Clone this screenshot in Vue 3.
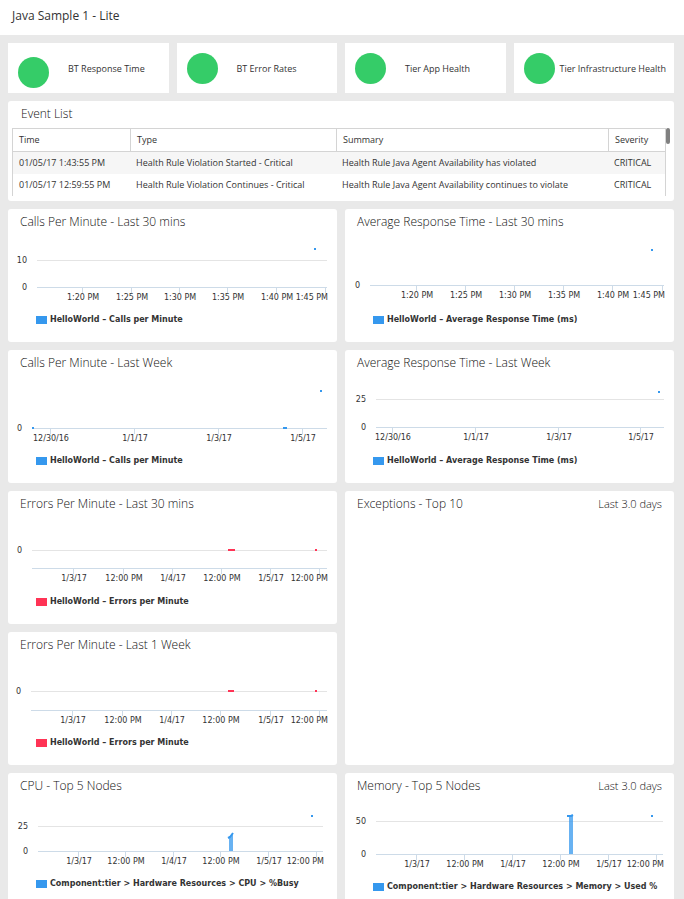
<script setup>
const BLUE = '#3598ee'
const RED = '#ff3355'

const statuses = [
  { label: 'BT Response Time', variant: 'low' },
  { label: 'BT Error Rates' },
  { label: 'Tier App Health' },
  { label: 'Tier Infrastructure Health', variant: 'tight' }
]

const events = [
  {
    time: '01/05/17 1:43:55 PM',
    type: 'Health Rule Violation Started - Critical',
    summary: 'Health Rule Java Agent Availability has violated',
    severity: 'CRITICAL'
  },
  {
    time: '01/05/17 12:59:55 PM',
    type: 'Health Rule Violation Continues - Critical',
    summary: 'Health Rule Java Agent Availability continues to violate',
    severity: 'CRITICAL'
  }
]

const minutes = ['1:20 PM', '1:25 PM', '1:30 PM', '1:35 PM', '1:40 PM', '1:45 PM']
const days = ['12/30/16', '1/1/17', '1/3/17', '1/5/17']
const halfDays = ['1/3/17', '12:00 PM', '1/4/17', '12:00 PM', '1/5/17', '12:00 PM']

const panels = [
  {
    title: 'Calls Per Minute - Last 30 mins',
    legend: 'HelloWorld – Calls per Minute',
    color: BLUE, height: 76, left: 29, right: 319, axis: 52,
    grid: [{ y: 25, label: '10' }, { y: 52, label: '0' }],
    ticks: [74, 123, 171, 219, 268, 317], labels: minutes, endLast: true,
    points: [{ x: 306, y: 13, w: 2 }]
  },
  {
    title: 'Average Response Time - Last 30 mins',
    legend: 'HelloWorld – Average Response Time (ms)',
    color: BLUE, height: 76, left: 25, right: 319, axis: 50,
    grid: [{ y: 50, label: '0' }],
    ticks: [71, 120, 169, 218, 267, 317], labels: minutes, endLast: true,
    points: [{ x: 306, y: 14, w: 2 }]
  },
  {
    title: 'Calls Per Minute - Last Week',
    legend: 'HelloWorld – Calls per Minute',
    color: BLUE, height: 76, left: 24, right: 319, axis: 52,
    grid: [{ y: 52, label: '0' }],
    ticks: [42, 126, 210, 294], labels: days,
    points: [{ x: 24, y: 51, w: 2 }, { x: 275, y: 51, w: 4 }, { x: 312, y: 14, w: 2 }]
  },
  {
    title: 'Average Response Time - Last Week',
    legend: 'HelloWorld – Average Response Time (ms)',
    color: BLUE, height: 76, left: 31, right: 319, axis: 51,
    grid: [{ y: 23, label: '25' }, { y: 51, label: '0' }],
    ticks: [47, 130, 213, 295], labels: days,
    points: [{ x: 313, y: 15, w: 2 }]
  },
  {
    title: 'Errors Per Minute - Last 30 mins',
    legend: 'HelloWorld – Errors per Minute',
    color: RED, height: 76, left: 24, right: 319, axis: 51,
    grid: [{ y: 33, label: '0' }],
    ticks: [65, 115, 164, 213, 262, 311], labels: halfDays, endLast: true,
    points: [{ x: 220, y: 32, w: 7 }, { x: 307, y: 32, w: 2 }]
  },
  { title: 'Exceptions - Top 10', range: 'Last 3.0 days', tall: true },
  {
    title: 'Errors Per Minute - Last 1 Week',
    legend: 'HelloWorld – Errors per Minute',
    color: RED, height: 76, left: 23, right: 319, axis: 52,
    grid: [{ y: 33, label: '0' }],
    ticks: [64, 114, 163, 212, 262, 311], labels: halfDays, endLast: true,
    points: [{ x: 220, y: 32, w: 6 }, { x: 307, y: 32, w: 2 }]
  },
  {
    title: 'CPU - Top 5 Nodes',
    legend: 'Component:tier > Hardware Resources > CPU > %Busy',
    color: BLUE, height: 76, left: 30, right: 315, axis: 52,
    grid: [{ y: 27, label: '25' }, { y: 52, label: '0' }],
    ticks: [70, 117, 165, 212, 260, 308], labels: halfDays, endLast: true,
    points: [{ x: 303, y: 16, w: 2 }],
    area: '221,52 221,38 225,35 225,52', line: '220,39 222,38 225,34'
  },
  {
    title: 'Memory - Top 5 Nodes', range: 'Last 3.0 days',
    legend: 'Component:tier > Hardware Resources > Memory > Used %',
    color: BLUE, height: 79, left: 31, right: 318, axis: 55,
    grid: [{ y: 22, label: '50' }, { y: 55, label: '0' }],
    ticks: [71, 119, 167, 215, 263, 311], labels: halfDays, endLast: true,
    points: [{ x: 306, y: 16, w: 2 }],
    area: '224,55 224,17 228,17 228,55', line: '222,17 226,17 228,16'
  }
]

const isEnd = (panel, i) => panel.endLast && i === panel.labels.length - 1
</script>

<template>
  <div class="page">
    <header class="topbar"><h1>Java Sample 1 - Lite</h1></header>

    <main class="board">
      <section class="statuses">
        <div v-for="s in statuses" :key="s.label" class="status" :class="s.variant">
          <span class="dot"></span>
          <span>{{ s.label }}</span>
        </div>
      </section>

      <section class="card events">
        <h2 class="events-title">Event List</h2>
        <div class="events-body">
          <table>
            <colgroup>
              <col class="c-time" /><col class="c-type" /><col /><col class="c-severity" />
            </colgroup>
            <thead>
              <tr><th>Time</th><th>Type</th><th>Summary</th><th>Severity</th></tr>
            </thead>
            <tbody>
              <tr v-for="e in events" :key="e.time">
                <td>{{ e.time }}</td><td>{{ e.type }}</td><td>{{ e.summary }}</td><td>{{ e.severity }}</td>
              </tr>
            </tbody>
          </table>
          <span class="thumb"></span>
        </div>
      </section>

      <section class="panels">
        <article v-for="p in panels" :key="p.title" class="card panel" :class="{ tall: p.tall }">
          <div class="panel-head">
            <h2>{{ p.title }}</h2>
            <span v-if="p.range" class="range">{{ p.range }}</span>
          </div>
          <template v-if="p.legend">
            <svg class="plot" :viewBox="`0 0 329 ${p.height}`" role="img" :aria-label="p.title">
              <g v-for="g in p.grid" :key="g.y">
                <rect v-if="g.y !== p.axis" class="grid" :x="p.left" :y="g.y" :width="p.right - p.left" height="1" />
                <text class="tick-text" text-anchor="end" :x="p.left - 10" :y="g.y + 3">{{ g.label }}</text>
              </g>
              <rect v-for="t in p.ticks" :key="t" class="tick" :x="t" :y="p.axis" width="1" height="6" />
              <rect class="axis" :x="p.left" :y="p.axis" :width="p.right - p.left" height="1" />
              <text
                v-for="(l, i) in p.labels" :key="i" class="tick-text"
                :text-anchor="isEnd(p, i) ? 'end' : 'middle'"
                :x="isEnd(p, i) ? p.right + 1 : p.ticks[i] + 1" :y="p.axis + 13"
              >{{ l }}</text>
              <polygon v-if="p.area" :points="p.area" :fill="p.color" opacity="0.75" />
              <polyline v-if="p.line" :points="p.line" fill="none" :stroke="p.color" stroke-width="2" />
              <rect v-for="d in p.points" :key="d.x" :x="d.x" :y="d.y" :width="d.w" height="2" :fill="p.color" />
            </svg>
            <div class="legend">
              <svg class="swatch" viewBox="0 0 11 8"><rect width="11" height="8" :fill="p.color" /></svg>
              <span>{{ p.legend }}</span>
            </div>
          </template>
        </article>
      </section>
    </main>
  </div>
</template>

<style>
body {
  margin: 0;
  background: #e9e9e9;
  overflow: hidden;
}
</style>

<style scoped>
.page {
  font-family: "Open Sans", sans-serif;
  color: #333;
}
h1,
h2 {
  margin: 0;
}
.topbar {
  background: #fff;
  padding: 6px 12px 9px;
}
h1 {
  font-size: 12px;
  line-height: 20px;
  font-weight: 400;
}
.board {
  display: grid;
  gap: 8px;
  padding: 8px 10px 8px 8px;
}
.statuses {
  display: grid;
  grid-template-columns: repeat(4, 1fr);
  gap: 8px;
}
.status {
  display: flex;
  align-items: center;
  gap: 19px;
  min-height: 50px;
  padding-left: 10px;
  background: #fff;
  font-size: 9px;
  white-space: nowrap;
}
.status.tight {
  gap: 5px;
}
.dot {
  flex: none;
  width: 31px;
  height: 31px;
  border-radius: 50%;
  background: #35cc68;
}
.status.low .dot {
  margin-top: 8px;
}
.card {
  background: #fff;
  border-radius: 3px;
}
h2 {
  font-size: 12px;
  line-height: 26px;
  font-weight: 300;
  color: #111;
}
.events {
  padding: 0 4px 5px;
}
.events-title {
  padding: 0 9px 1px;
}
.events-body {
  position: relative;
  padding-right: 4px;
}
table {
  width: 100%;
  table-layout: fixed;
  border-spacing: 0;
  font-size: 9px;
  border-left: 1px solid #d4d4d4;
  border-right: 1px solid #d4d4d4;
}
.c-time {
  width: 117px;
}
.c-type {
  width: 206px;
}
.c-severity {
  width: 57px;
}
th,
td {
  padding: 0 6px;
  text-align: left;
  font-weight: 400;
  white-space: nowrap;
  line-height: 22px;
}
th {
  border-top: 1px solid #d4d4d4;
  border-bottom: 1px solid #d4d4d4;
}
th + th {
  border-left: 1px solid #d4d4d4;
}
tbody tr:nth-child(odd) td {
  background: #f6f6f6;
}
.thumb {
  position: absolute;
  top: 0;
  right: 0;
  width: 4px;
  height: 16px;
  border-radius: 2px;
  background: #808080;
}
.panels {
  display: grid;
  grid-template-columns: 1fr 1fr;
  gap: 8px;
}
.panel {
  padding-bottom: 13px;
}
.tall {
  grid-row: span 2;
}
.panel-head {
  display: flex;
  justify-content: space-between;
  padding: 0 12px;
}
.range {
  font-size: 11px;
  line-height: 26px;
  font-weight: 300;
  color: #111;
}
.plot {
  display: block;
  width: 100%;
}
.grid {
  fill: #e4e4e4;
}
.axis {
  fill: #cddbe8;
}
.tick {
  fill: #cddbe8;
}
.tick-text {
  font-family: "DejaVu Sans", sans-serif;
  font-size: 8px;
  fill: #333;
}
.legend {
  display: flex;
  align-items: center;
  gap: 3px;
  padding-left: 28px;
  font-family: "DejaVu Sans", sans-serif;
  font-size: 8px;
  line-height: 18px;
  font-weight: 700;
  white-space: nowrap;
}
.swatch {
  width: 11px;
  height: 8px;
}
</style>
